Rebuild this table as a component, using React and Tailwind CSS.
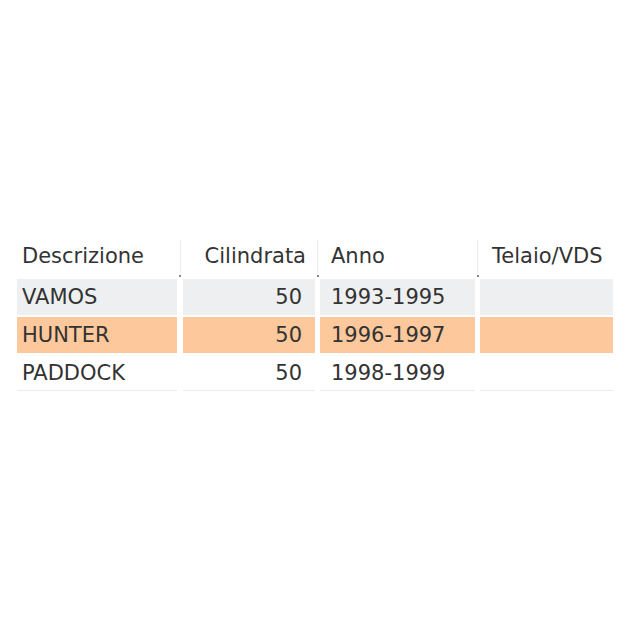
import React from 'react';

const cols = [
  { w: 'w-[160px]', align: 'text-left pl-[5px]' },
  { w: 'w-[132px]', align: 'text-right pr-[13px]' },
  { w: 'w-[155px]', align: 'text-left pl-[11px]' },
  { w: 'w-[133px]', align: 'text-left pl-[12px]' },
];

const headAlign = ['text-left pl-[5px]', 'text-right pr-[9px]', 'text-left pl-[11px]', 'text-left pl-[12px]'];

const gaps = ['w-[6px]', 'w-[5px]', 'w-[5px]'];

const header = ['Descrizione', 'Cilindrata', 'Anno', 'Telaio/VDS'];

const rows = [
  { bg: 'bg-[#eeeff1]', cells: ['VAMOS', '50', '1993-1995', ''] },
  { bg: 'bg-[#fdc89b]', cells: ['HUNTER', '50', '1996-1997', ''] },
  { bg: 'bg-white border-b border-[#ececec]', cells: ['PADDOCK', '50', '1998-1999', ''] },
];

const HeaderSep = ({ w }) => (
  <div className={`${w} relative flex justify-center`}>
    <div className="w-px h-full bg-[#ececec]" />
    <div className="absolute bottom-0 w-[2px] h-[2px] bg-[#8a8a8a]" />
  </div>
);

export default function App() {
  return (
    <div
      className="w-[632px] h-[632px] bg-white pt-[240px] pl-[17px] text-[21px] text-[#333333]"
      style={{ fontFamily: '"DejaVu Sans", Verdana, sans-serif' }}
    >
      <div className="flex flex-col gap-[2px]">
        <div className="flex h-[37px]">
          {header.map((h, i) => (
            <React.Fragment key={h}>
              <div className={`${cols[i].w} ${headAlign[i]} leading-[32px] whitespace-nowrap`}>{h}</div>
              {i < 3 && <HeaderSep w={gaps[i]} />}
            </React.Fragment>
          ))}
        </div>
        {rows.map((r, ri) => (
          <div key={ri} className="flex h-[36px]">
            {r.cells.map((c, i) => (
              <React.Fragment key={i}>
                <div className={`${cols[i].w} ${cols[i].align} ${r.bg} leading-[36px]`}>{c}</div>
                {i < 3 && <div className={gaps[i]} />}
              </React.Fragment>
            ))}
          </div>
        ))}
      </div>
    </div>
  );
}
